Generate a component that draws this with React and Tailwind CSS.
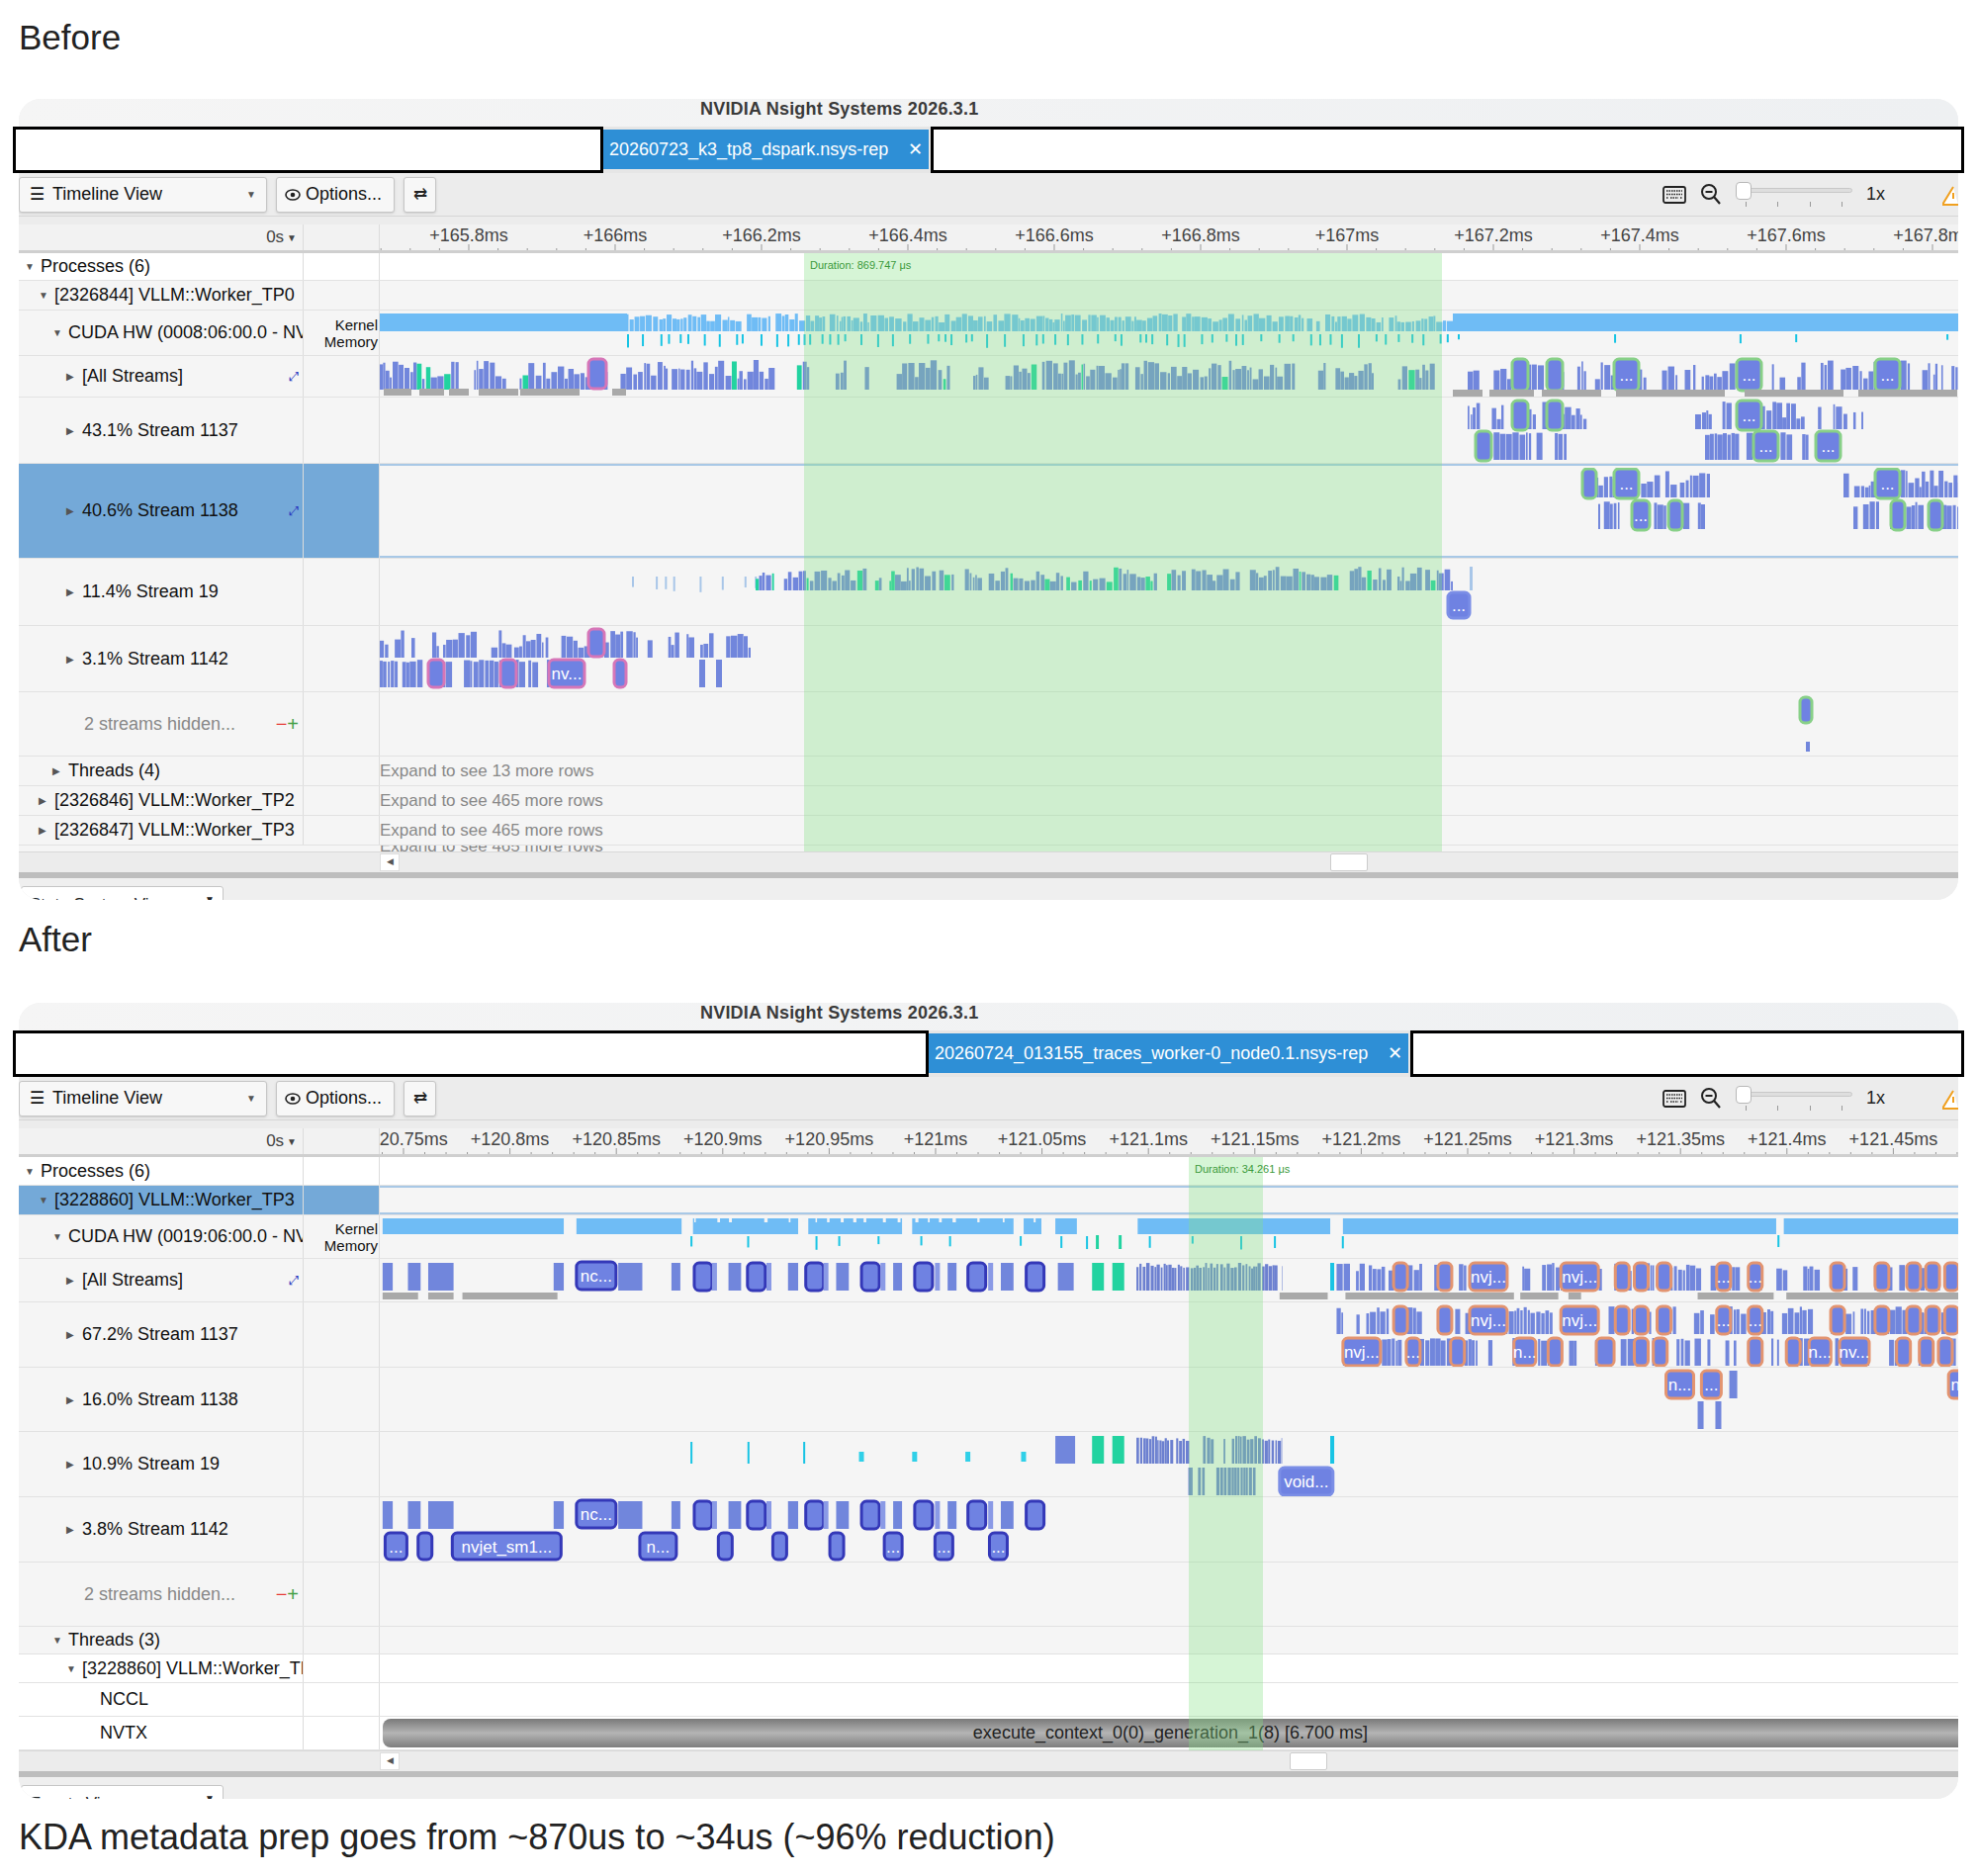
import React from "react";

function rng(s) { return () => { s = (s * 16807) % 2147483647; return (s - 1) / 2147483646; }; }

const BLUE = "#7186dc", KBLUE = "#6fbcf5", CYAN = "#18c4e4", TEAL = "#22d3a0", GRAY = "#a9a9a9";

function hist(r, x0, x1, y, h, color, o = {}) {
  const out = []; let x = x0; const mn = o.min ?? 0.35;
  while (x < x1) {
    const w = 1.5 + r() * (o.maxw || 5);
    const hh = h * (mn + r() * (1 - mn));
    out.push({ x, y: y + h - hh, w: Math.min(w, x1 - x), h: hh, fill: r() < (o.alt || 0) ? o.altColor : color });
    x += w + (r() < (o.gapP || 0.15) ? r() * (o.gap || 14) : r() * 1.5);
  }
  return out;
}
function ticks(r, x0, x1, y, h, color, step = 12) {
  const out = []; let x = x0;
  while (x < x1) { out.push({ x, y, w: 2, h: h * (0.5 + r() * 0.5), fill: color }); x += step * (0.4 + r()); }
  return out;
}
const seg = (x, w, y, h, fill) => ({ x, y, w, h, fill });
const box = (x, w, y, h, stroke, label) => ({ x, y, w, h, fill: "#6f82e2", stroke, sw: 3, rx: 5, label });

const GREEN_S = "#88d088", DARK_S = "#3438b8", ORANGE_S = "#e39470", PINK_S = "#d676b8";

function Track({ items, h }) {
  return (
    <svg width="1599" height={h} className="block">
      {items.map((it, i) => (
        <g key={i}>
          <rect x={it.x} y={it.y} width={Math.max(it.w, 0.5)} height={it.h} fill={it.fill} stroke={it.stroke} strokeWidth={it.sw} rx={it.rx} />
          {it.label && (
            <text x={it.x + it.w / 2} y={it.y + it.h / 2 + 6} textAnchor="middle" fontSize="17" fill="#fff" fontFamily="Liberation Sans, Arial, sans-serif">{it.label}</text>
          )}
        </g>
      ))}
    </svg>
  );
}

function beforeRows() {
  const r = rng(7);
  const cuda = [seg(0, 250, 3, 18, KBLUE), ...hist(r, 250, 1085, 3, 18, KBLUE, { min: 0.5, gapP: 0.1, gap: 6 }), seg(1085, 514, 3, 18, KBLUE),
    ...ticks(r, 250, 1085, 24, 14, CYAN, 14), ...ticks(r, 1090, 1599, 24, 10, CYAN, 120)];
  const all = [...hist(r, 0, 1085, 4, 30, BLUE, { gapP: 0.12, gap: 30, alt: 0.08, altColor: TEAL }),
    seg(4, 28, 33, 7, GRAY), seg(40, 25, 33, 7, GRAY), seg(70, 20, 33, 7, GRAY), seg(100, 40, 33, 7, GRAY), seg(142, 60, 33, 7, GRAY), seg(235, 14, 33, 7, GRAY),
    ...hist(r, 1100, 1599, 4, 30, BLUE, { gapP: 0.3, gap: 18 }), box(211, 18, 3, 30, PINK_S),
    ...[[1145, 16], [1180, 16], [1248, 25], [1372, 25], [1512, 25]].map(([x, w]) => box(x, w, 3, 32, GREEN_S, w > 20 ? "..." : "")),
    seg(1085, 30, 34, 7, GRAY), seg(1122, 45, 34, 7, GRAY), seg(1175, 60, 34, 7, GRAY), seg(1250, 110, 34, 7, GRAY), seg(1380, 100, 34, 7, GRAY), seg(1495, 100, 34, 7, GRAY)];
  const s1137 = [...hist(r, 1100, 1225, 4, 28, BLUE, { gapP: 0.3 }), ...hist(r, 1330, 1500, 4, 28, BLUE, { gapP: 0.3 }),
    ...hist(r, 1108, 1200, 35, 28, BLUE, { gapP: 0.3, min: 0.9 }), ...hist(r, 1340, 1460, 35, 28, BLUE, { gapP: 0.3, min: 0.9 }),
    box(1145, 16, 3, 30, GREEN_S), box(1180, 16, 3, 30, GREEN_S), box(1372, 25, 3, 30, GREEN_S, "..."),
    box(1108, 16, 34, 30, GREEN_S), box(1389, 25, 34, 30, GREEN_S, "..."), box(1452, 25, 34, 30, GREEN_S, "...")];
  const s1138 = [...hist(r, 1220, 1345, 2, 28, BLUE, { gapP: 0.3 }), ...hist(r, 1480, 1599, 2, 28, BLUE, { gapP: 0.3 }),
    ...hist(r, 1232, 1340, 34, 28, BLUE, { gapP: 0.3, min: 0.8 }), ...hist(r, 1490, 1599, 34, 28, BLUE, { gapP: 0.3, min: 0.8 }),
    box(1216, 14, 1, 30, GREEN_S), box(1248, 25, 1, 30, GREEN_S, "..."), box(1512, 25, 1, 30, GREEN_S, "..."),
    box(1266, 18, 33, 30, GREEN_S, "..."), box(1303, 14, 33, 30, GREEN_S), box(1528, 14, 33, 30, GREEN_S), box(1566, 14, 33, 30, GREEN_S)];
  const s19 = [...ticks(r, 255, 380, 18, 16, "#a8c6e8", 20), ...hist(r, 380, 1085, 8, 24, BLUE, { gapP: 0.08, gap: 12, alt: 0.2, altColor: TEAL }),
    seg(1102, 3, 8, 24, "#a8c6e8"), box(1080, 22, 34, 26, "#7b8ee6", "...")];
  const s1142 = [...hist(r, 0, 375, 4, 28, BLUE, { gapP: 0.25, gap: 20 }), ...hist(r, 0, 180, 34, 28, BLUE, { gapP: 0.3, gap: 12, min: 0.9 }),
    box(211, 16, 3, 28, PINK_S), box(49, 16, 34, 28, PINK_S), box(122, 16, 34, 28, PINK_S), box(171, 36, 34, 28, PINK_S, "nv..."), box(237, 12, 34, 28, PINK_S),
    seg(323, 6, 34, 28, BLUE), seg(340, 6, 34, 28, BLUE)];
  const hidden = [box(1436, 12, 5, 26, GREEN_S), seg(1442, 4, 50, 10, BLUE)];
  return { cuda, all, s1137, s1138, s19, s1142, hidden };
}

function afterRows() {
  const r = rng(11);
  const d = (x) => x * 1.281 - 384;
  const kband = [[302, 445], [455, 538], [547, 630], [638, 712], [720, 800], [808, 822], [833, 850], [898, 1050], [1060, 1402], [1408, 1548]];
  const cuda = [...kband.map(([a, b]) => seg(d(a), d(b) - d(a), 3, 16, KBLUE)), ...hist(r, d(548), d(830), 3, 16, "#f4f4f4", { min: 0.1, gapP: 0.1, maxw: 2 }).filter((_, i) => i % 4 === 0).map(o => ({ ...o, h: 4, y: 3 })),
    ...ticks(r, d(545), d(1060), 21, 14, CYAN, 55), seg(d(865), 3, 20, 14, TEAL), seg(d(883), 3, 20, 14, TEAL), seg(d(1403), 2, 20, 12, CYAN)];
  const leftLane = (y, h) => [
    ...[[302, 310], [322, 332], [338, 358], [437, 445], [488, 507], [530, 537], [575, 585], [622, 630], [660, 670], [705, 712], [748, 755], [790, 800]].map(([a, b]) => seg(d(a), d(b) - d(a), y, h, BLUE)),
    box(d(455), 40, y - 1, h, DARK_S, "nc..."), ...[548, 590, 636, 680, 722, 764, 810].map(x => box(d(x), 18, y, h, DARK_S)),
    ...[562, 605, 650, 695, 738, 780].map(x => seg(d(x), 5, y, h, "#8a9ae6"))];
  const rightLane = (y, h) => [...hist(r, d(1055), d(1548), y, h, BLUE, { gapP: 0.35, gap: 20, min: 0.7 }),
    ...[[1100, 14], [1135, 14], [1160, 38, "nvj..."], [1232, 38, "nvj..."], [1275, 14], [1290, 14], [1308, 14], [1355, 14, "..."], [1380, 14, "..."], [1445, 14], [1480, 14], [1505, 14], [1520, 14], [1535, 14]]
      .map(([x, w, l]) => box(d(x), w, y, h, ORANGE_S, l || (w > 20 ? "..." : "")))];
  const all = [...leftLane(4, 28), ...rightLane(4, 28),
    seg(d(835), 16, 4, 28, BLUE), seg(d(862), 12, 4, 28, TEAL), seg(d(878), 12, 4, 28, TEAL), ...hist(r, d(897), d(1012), 4, 28, "#6c80d0", { min: 0.8, gapP: 0, maxw: 2 }), seg(d(1050), 4, 4, 28, CYAN),
    ...[[302, 330], [338, 358], [365, 440], [1010, 1048], [1062, 1195], [1200, 1230], [1238, 1248], [1340, 1400], [1410, 1548]].map(([a, b]) => seg(d(a), d(b) - d(a), 34, 7, GRAY))];
  const s1137 = [...rightLane(4, 28),
    ...hist(r, d(1060), d(1548), 36, 28, BLUE, { gapP: 0.4, gap: 22, min: 0.9 }),
    ...[[1060, 38, "nvj..."], [1110, 14, "..."], [1145, 14], [1195, 22, "n..."], [1222, 14], [1260, 18], [1290, 14], [1305, 14], [1380, 14], [1410, 14], [1428, 22, "n..."], [1452, 30, "nv..."], [1497, 14], [1515, 14], [1530, 14]]
      .map(([x, w, l]) => box(d(x), w, 36, 28, ORANGE_S, l))];
  const s1138 = [box(d(1315), 28, 3, 28, ORANGE_S, "n..."), box(d(1343), 20, 3, 28, ORANGE_S, "..."), seg(d(1365), 8, 3, 28, BLUE), box(d(1538), 14, 3, 28, ORANGE_S, "n"),
    seg(d(1340), 6, 34, 28, BLUE), seg(d(1354), 6, 34, 28, BLUE)];
  const s19 = [seg(d(545), 2, 10, 22, CYAN), seg(d(590), 2, 10, 22, CYAN), seg(d(634), 2, 10, 22, CYAN), ...[678, 720, 762, 806].map(x => seg(d(x), 5, 20, 10, "#30d0e8")),
    seg(d(833), 20, 4, 28, BLUE), seg(d(862), 12, 4, 28, TEAL), seg(d(878), 12, 4, 28, TEAL), ...hist(r, d(897), d(1012), 4, 28, "#6c80d0", { min: 0.8, gapP: 0, maxw: 2 }), seg(d(1050), 4, 4, 28, CYAN),
    ...hist(r, d(938), d(997), 36, 28, "#6c80d0", { min: 1, gapP: 0, maxw: 2 }), box(d(1010), 54, 36, 28, "#7b8ee6", "void...")];
  const s1142 = [...leftLane(4, 28),
    ...[[304, 22, "..."], [330, 14], [357, 110, "nvjet_sm1..."], [505, 37, "n..."], [567, 14], [610, 14], [655, 14], [698, 18, "..."], [738, 18, "..."], [781, 18, "..."]]
      .map(([x, w, l]) => box(d(x), w, 36, 27, DARK_S, l))];
  return { cuda, all, s1137, s1138, s19, s1142, hidden: [] };
}

const FONT = { fontFamily: '"Liberation Sans", Arial, sans-serif' };

function Row({ h, label, indent, open, tri = true, sel, bg = "bg-[#f5f5f5]", extra, col2, track, note, hiddenCtl }) {
  return (
    <div className={`flex border-b border-[#e2e2e2] ${bg}`} style={{ height: h }}>
      <div className={`w-[288px] shrink-0 flex items-center border-r border-[#dcdcdc] overflow-hidden whitespace-nowrap text-[18px] ${sel ? "bg-[#74a9d8]" : ""}`} style={{ paddingLeft: indent }}>
        {tri ? <span className="text-[#555] text-[10px] w-[16px] shrink-0">{open ? "▼" : "▶"}</span> : null}
        <span className={hiddenCtl ? "text-[#888]" : "text-[#111]"}>{label}</span>
        {hiddenCtl && <span className="ml-auto mr-[4px] text-[20px]"><span className="text-[#e53935]">−</span><span className="text-[#43a047]">+</span></span>}
        {extra && <span className="ml-auto mr-[4px] text-[#2a36c0] text-[13px]">⤢</span>}
      </div>
      <div className={`w-[77px] shrink-0 border-r border-[#dcdcdc] flex flex-col items-end justify-center leading-[17px] text-[15px] text-[#111] pr-[1px] ${sel ? "bg-[#74a9d8]" : ""}`}>{col2}</div>
      <div className="flex-1 overflow-hidden relative">
        {track}
        {note && <div className="absolute left-0 top-0 h-full flex items-center text-[17px] text-[#888] whitespace-nowrap">{note}</div>}
      </div>
    </div>
  );
}

function Ruler({ labels, first, step }) {
  const minor = [];
  for (let x = first - step * 2; x < 1599; x += step / 5) minor.push(x);
  return (
    <div className="flex h-[29px] bg-[#f2f2f2] border-b-[3px] border-[#cfcfcf]">
      <div className="w-[288px] shrink-0 border-r border-[#dcdcdc] flex items-center justify-end pr-[6px] text-[17px] text-[#444]">0s <span className="text-[10px] ml-[3px]">▼</span></div>
      <div className="w-[77px] shrink-0 border-r border-[#dcdcdc]" />
      <div className="flex-1 relative overflow-hidden">
        <svg width="1599" height="29" className="absolute left-0 top-0">
          {minor.map((x, i) => <line key={i} x1={x} x2={x} y1={i % 5 === 0 ? 20 : 24} y2={27} stroke="#999" strokeWidth="1" />)}
          {labels.map((l, i) => (
            <text key={l} x={first + i * step} y={17} textAnchor="middle" fontSize="18" fill="#444" fontFamily="Liberation Sans, Arial, sans-serif">{l}</text>
          ))}
        </svg>
      </div>
    </div>
  );
}

function Panel({ after }) {
  const D = after ? afterRows() : beforeRows();
  const tabLeft = after ? 926 : 597;
  const tabW = after ? 485 : 329;
  const tabLabel = after ? "20260724_013155_traces_worker-0_node0.1.nsys-rep" : "20260723_k3_tp8_dspark.nsys-rep";
  const labels = after
    ? ["+120.75ms", "+120.8ms", "+120.85ms", "+120.9ms", "+120.95ms", "+121ms", "+121.05ms", "+121.1ms", "+121.15ms", "+121.2ms", "+121.25ms", "+121.3ms", "+121.35ms", "+121.4ms", "+121.45ms", "+121.5ms"]
    : ["+165.8ms", "+166ms", "+166.2ms", "+166.4ms", "+166.6ms", "+166.8ms", "+167ms", "+167.2ms", "+167.4ms", "+167.6ms", "+167.8ms"];
  const green = after ? [818, 75] : [429, 645];
  const thumb = after ? 920 : 961;
  const rowsB = (
    <>
      <Row h={28} open label="Processes (6)" indent={6} bg="bg-white" track={null} />
      <Row h={30} open label="[2326844] VLLM::Worker_TP0" indent={20} />
      <Row h={46} open label="CUDA HW (0008:06:00.0 - NVIDIA" indent={34} col2={<><span>Kernel</span><span>Memory</span></>} track={<Track h={46} items={D.cuda} />} />
      <Row h={42} label="[All Streams]" indent={48} extra track={<Track h={42} items={D.all} />} />
      <Row h={67} label="43.1% Stream 1137" indent={48} track={<Track h={67} items={D.s1137} />} />
      <Row h={96} label="40.6% Stream 1138" indent={48} sel extra track={<div className="h-full border-y-2 border-[#a8c8e6] pt-[2px]"><Track h={90} items={D.s1138} /></div>} />
      <Row h={68} label="11.4% Stream 19" indent={48} track={<Track h={68} items={D.s19} />} />
      <Row h={67} label="3.1% Stream 1142" indent={48} track={<Track h={67} items={D.s1142} />} />
      <Row h={65} tri={false} hiddenCtl label="2 streams hidden..." indent={66} track={<Track h={65} items={D.hidden} />} />
      <Row h={30} label="Threads (4)" indent={34} note="Expand to see 13 more rows" />
      <Row h={30} label="[2326846] VLLM::Worker_TP2" indent={20} note="Expand to see 465 more rows" />
      <Row h={30} label="[2326847] VLLM::Worker_TP3" indent={20} note="Expand to see 465 more rows" />
      <div className="h-[6px] overflow-hidden flex bg-[#f5f5f5]"><div className="w-[365px]" /><div className="text-[17px] text-[#888] -mt-[12px] whitespace-nowrap">Expand to see 465 more rows</div></div>
    </>
  );
  const rowsA = (
    <>
      <Row h={29} open label="Processes (6)" indent={6} bg="bg-white" />
      <Row h={30} open sel label="[3228860] VLLM::Worker_TP3" indent={20} track={<div className="h-full border-y-2 border-[#a8c8e6]" />} />
      <Row h={44} open label="CUDA HW (0019:06:00.0 - NVIDIA" indent={34} col2={<><span>Kernel</span><span>Memory</span></>} track={<Track h={44} items={D.cuda} />} />
      <Row h={44} label="[All Streams]" indent={48} extra track={<Track h={44} items={D.all} />} />
      <Row h={66} label="67.2% Stream 1137" indent={48} track={<Track h={66} items={D.s1137} />} />
      <Row h={65} label="16.0% Stream 1138" indent={48} track={<Track h={65} items={D.s1138} />} />
      <Row h={66} label="10.9% Stream 19" indent={48} track={<Track h={66} items={D.s19} />} />
      <Row h={66} label="3.8% Stream 1142" indent={48} track={<Track h={66} items={D.s1142} />} />
      <Row h={65} tri={false} hiddenCtl label="2 streams hidden..." indent={66} />
      <Row h={28} open label="Threads (3)" indent={34} />
      <Row h={29} open label="[3228860] VLLM::Worker_TP3" indent={48} bg="bg-white" />
      <Row h={34} tri={false} label="NCCL" indent={82} bg="bg-white" />
      <Row h={34} tri={false} label="NVTX" indent={82} bg="bg-white" track={
        <div className="absolute left-[3px] right-0 top-[2px] h-[29px] rounded-l-[8px] bg-gradient-to-b from-[#7a7a7a] via-[#b4b4b4] to-[#7e7e7e] flex items-center justify-center text-[18px] text-[#222]">execute_context_0(0)_generation_1(8) [6.700 ms]</div>
      } />
    </>
  );
  return (
    <div className="relative mx-[19px]" style={FONT}>
      <div className="rounded-[22px] bg-[#efefef] overflow-hidden">
        <div className="h-[28px] bg-gradient-to-r from-[#f5f5f5] to-[#eef0f2] relative">
          <div className="absolute left-[689px] -top-[3px] text-[18px] font-bold text-[#3a3a3a] tracking-[0.2px]">NVIDIA Nsight Systems 2026.3.1</div>
        </div>
        <div className="h-[47px] bg-[#e6e6e6]" />
        <div className="h-[44px] flex items-center gap-[9px] bg-[#ececec] border-b border-[#d6d6d6] relative">
          <div className="w-[251px] h-[36px] bg-[#f7f7f7] border border-[#c6c6c6] rounded-[3px] shadow-sm flex items-center px-[10px] text-[18px] text-[#111]">
            <span className="mr-[8px] text-[17px]">☰</span>Timeline View<span className="ml-auto text-[10px] text-[#555]">▼</span>
          </div>
          <div className="w-[120px] h-[36px] bg-[#f7f7f7] border border-[#c6c6c6] rounded-[3px] shadow-sm flex items-center px-[8px] text-[18px] text-[#111]">
            <svg width="16" height="16" viewBox="0 0 16 16" className="mr-[5px]"><ellipse cx="8" cy="8" rx="7" ry="5" fill="none" stroke="#222" strokeWidth="1.6" /><circle cx="8" cy="8" r="2.3" fill="#222" /></svg>Options...
          </div>
          <div className="w-[33px] h-[36px] bg-[#f7f7f7] border border-[#c6c6c6] rounded-[3px] shadow-sm flex items-center justify-center text-[17px] text-[#222]">⇄</div>
          <div className="ml-auto flex items-center gap-[14px]">
            <svg width="24" height="18" viewBox="0 0 24 18"><rect x="1" y="1" width="22" height="16" rx="2" fill="none" stroke="#222" strokeWidth="1.8" /><path d="M4 5h16M4 8.5h16M4 12h2M8 12h8M18 12h2" stroke="#222" strokeWidth="1.5" strokeDasharray="1.5 1" /></svg>
            <svg width="22" height="24" viewBox="0 0 22 24"><circle cx="9" cy="9" r="7" fill="none" stroke="#222" strokeWidth="2" /><path d="M5.5 9h7M14 14l6 7" stroke="#222" strokeWidth="2.2" /></svg>
            <div className="relative w-[118px] h-[26px]">
              <div className="absolute left-[6px] right-0 top-[6px] h-[5px] rounded bg-[#dedede] border border-[#c8c8c8]" />
              <div className="absolute left-0 top-0 w-[16px] h-[18px] bg-white border border-[#b8b8b8] rounded-[4px]" />
              <div className="absolute left-[10px] right-[10px] top-[20px] flex justify-between">{[0, 1, 2, 3].map(i => <div key={i} className="w-px h-[5px] bg-[#999]" />)}</div>
            </div>
            <span className="text-[18px] text-[#222] mr-[74px]">1x</span>
          </div>
          <svg width="16" height="22" viewBox="0 0 16 22" className="absolute right-0 top-[12px]"><path d="M11 2L0 20h16" fill="#fff" stroke="#f0a020" strokeWidth="2" /><path d="M11 8v6" stroke="#f0a020" strokeWidth="2" /></svg>
        </div>
        <div className="h-[8px] bg-[#ececec]" />
        <Ruler labels={labels} first={after ? 24 : 90} step={after ? 107.6 : 148} />
        <div className="relative bg-white">
          {after ? rowsA : rowsB}
          <div className="absolute top-0 bottom-0 bg-[rgba(130,225,130,0.33)] pointer-events-none" style={{ left: 365 + green[0], width: green[1] }}>
            <div className="text-[11px] text-[#3b9a3b] pl-[6px] pt-[4px] whitespace-nowrap">Duration: {after ? "34.261" : "869.747"} μs</div>
          </div>
        </div>
        <div className="h-[21px] flex bg-[#ececec] border-t border-[#d8d8d8]">
          <div className="w-[365px] shrink-0" />
          <div className="flex-1 relative">
            <div className="absolute left-0 top-[1px] w-[20px] h-[18px] bg-white border border-[#ddd] flex items-center justify-center text-[9px] text-[#555]">◀</div>
            <div className="absolute top-[1px] w-[38px] h-[18px] bg-white border border-[#ccc] rounded-[2px]" style={{ left: thumb }} />
          </div>
        </div>
        <div className="h-[6px] bg-[#bdbdbd]" />
        <div className="h-[22px] bg-[#efefef] relative overflow-hidden">
          <div className="absolute left-[2px] top-[8px] w-[205px] h-[30px] bg-white border border-[#c6c6c6] rounded-[3px] px-[8px] pt-[5px] text-[17px] text-[#222] flex">
            {after ? "Events View" : "State System View"}<span className="ml-auto text-[10px]">▼</span>
          </div>
        </div>
      </div>
      <div className="absolute top-[28px] -left-[6px] -right-[6px] h-[47px] flex">
        <div className="h-full bg-white border-[3px] border-black" style={{ width: tabLeft }} />
        <div className="h-[40px] mt-[3px] bg-[#2e8fd6] flex items-center px-[6px] text-[18px] text-white whitespace-nowrap" style={{ width: tabW }}>
          {tabLabel}<span className="ml-auto text-[18px]">✕</span>
        </div>
        <div className="h-full flex-1 bg-white border-[3px] border-black ml-[2px]" />
      </div>
    </div>
  );
}

export default function App() {
  return (
    <div className="w-[1999px] h-[1897px] bg-white overflow-hidden" style={{ fontFamily: '"Liberation Sans", Arial, sans-serif' }}>
      <div className="h-[100px] pl-[19px] pt-[12px] text-[35px] text-[#222]">Before</div>
      <Panel />
      <div className="h-[104px] pl-[19px] pt-[14px] text-[35px] text-[#222]">After</div>
      <Panel after />
      <div className="pl-[19px] pt-[12px] text-[36px] text-[#222]">KDA metadata prep goes from ~870us to ~34us (~96% reduction)</div>
    </div>
  );
}
